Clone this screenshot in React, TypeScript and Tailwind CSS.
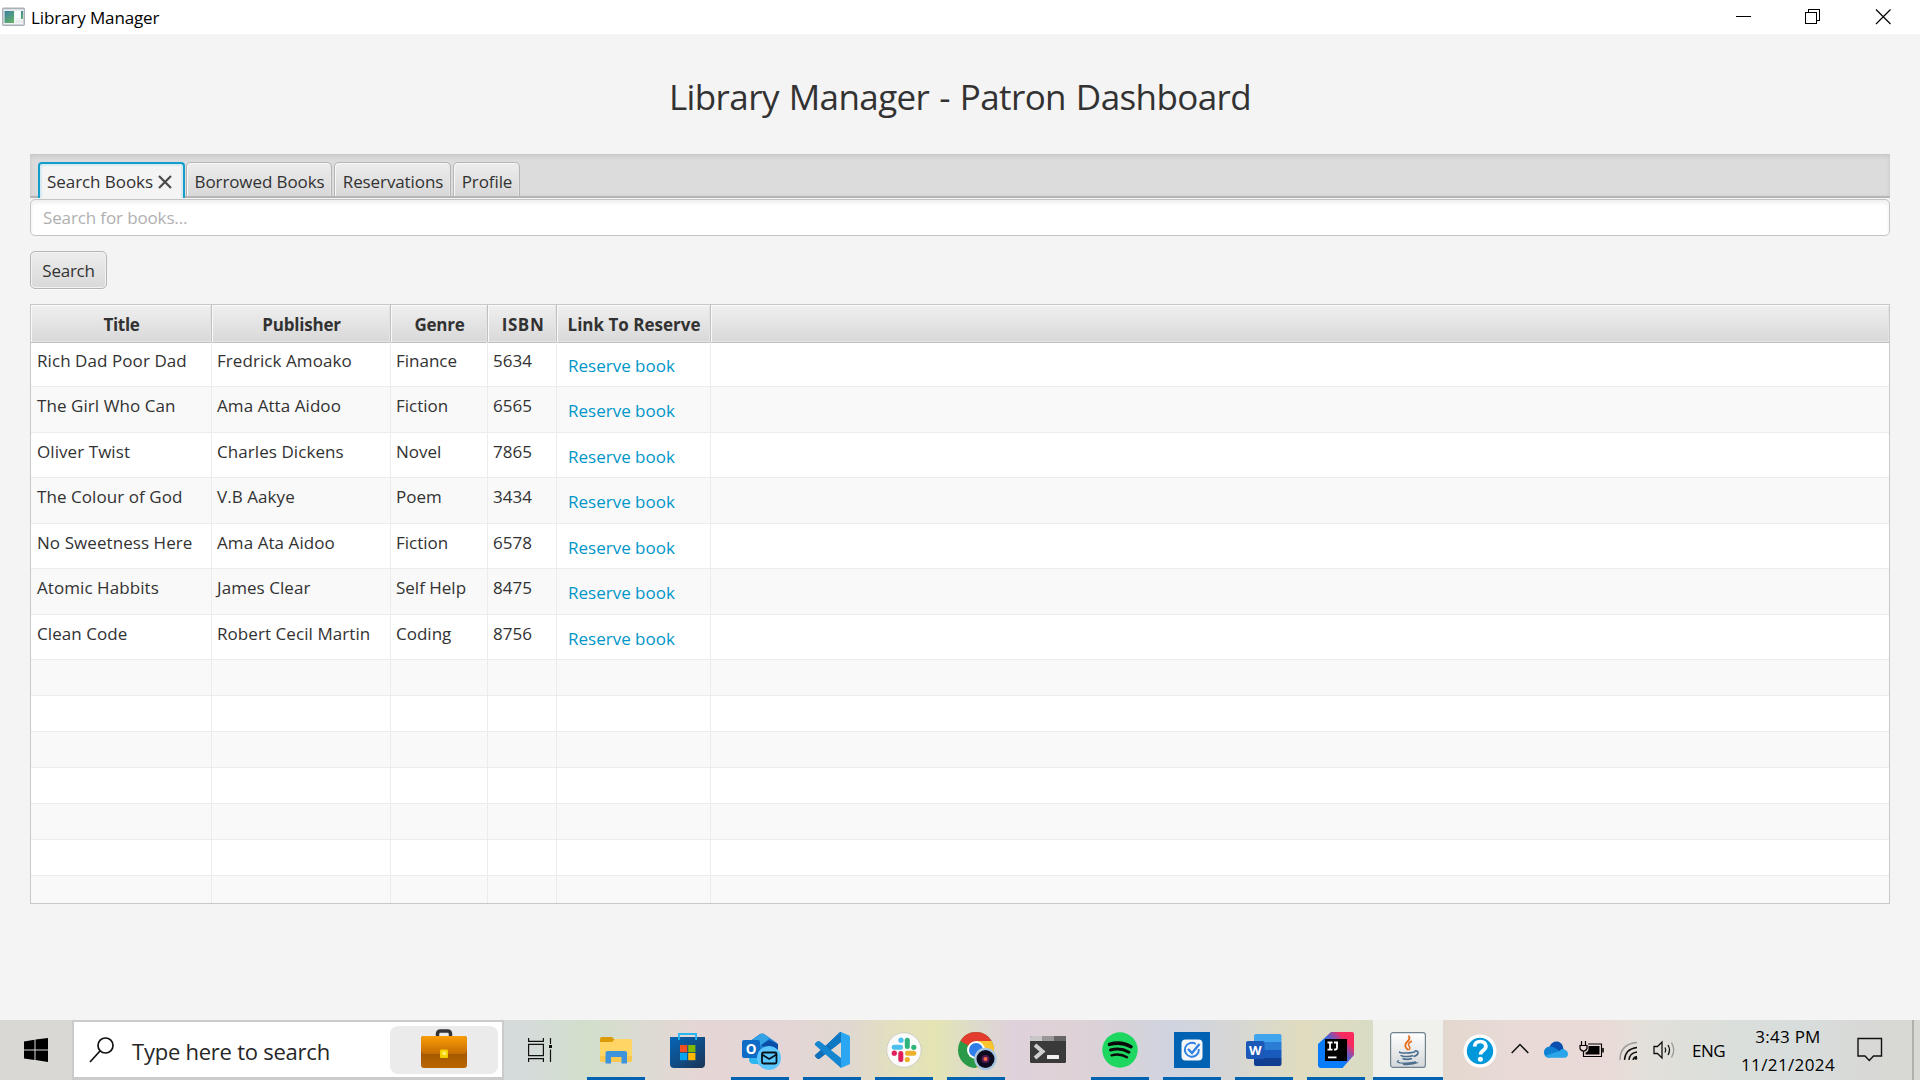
import type { ReactNode } from "react";

type Book = { title: string; publisher: string; genre: string; isbn: string };

const books: Book[] = [
  { title: "Rich Dad Poor Dad", publisher: "Fredrick Amoako", genre: "Finance", isbn: "5634" },
  { title: "The Girl Who Can", publisher: "Ama Atta Aidoo", genre: "Fiction", isbn: "6565" },
  { title: "Oliver Twist", publisher: "Charles Dickens", genre: "Novel", isbn: "7865" },
  { title: "The Colour of God", publisher: "V.B Aakye", genre: "Poem", isbn: "3434" },
  { title: "No Sweetness Here", publisher: "Ama Ata Aidoo", genre: "Fiction", isbn: "6578" },
  { title: "Atomic Habbits", publisher: "James Clear", genre: "Self Help", isbn: "8475" },
  { title: "Clean Code", publisher: "Robert Cecil Martin", genre: "Coding", isbn: "8756" },
];

const columns = "grid grid-cols-[181px_179px_97px_69px_154px_1fr]";

function TitleBar() {
  return (
    <header className="flex h-[34px] items-center bg-white pl-0.5">
      <svg width="24" height="20" viewBox="0 0 24 20">
        <defs>
          <linearGradient id="appPane" x1="0" y1="0" x2="0.6" y2="1">
            <stop offset="0" stopColor="#3d7fa6" />
            <stop offset="1" stopColor="#5fae6c" />
          </linearGradient>
        </defs>
        <rect x="0.75" y="1.25" width="21.5" height="17" rx="1" fill="#f4f5f6" stroke="#a9b0b8" strokeWidth="1.5" />
        <rect x="1.5" y="2" width="20" height="1.5" fill="#dde1e6" />
        <rect x="2.5" y="4" width="9.5" height="12" fill="url(#appPane)" />
        <rect x="13.5" y="4" width="4.5" height="7" fill="#fff" />
        <rect x="19" y="4" width="2" height="8" fill="url(#appPane)" />
        <rect x="13.5" y="13" width="7.5" height="3" fill="#e9ecee" />
      </svg>
      <span className="ml-[5px] pt-[2px] text-[17px] leading-[32px] tracking-[-0.12px] text-black">Library Manager</span>
      <div className="ml-auto flex items-center gap-[54px] pr-7">
        <svg className="-mr-px" width="16" height="16" viewBox="0 0 16 16" fill="none" stroke="#000" shapeRendering="crispEdges">
          <path d="M0 7.5h15" />
        </svg>
        <svg width="16" height="16" viewBox="0 0 16 16" fill="none" stroke="#000" shapeRendering="crispEdges">
          <path d="M.5 3.500h11v11H.5zM3.500 3.500V.5h11v11h-3" />
        </svg>
        <svg width="17" height="16" viewBox="0 0 17 16" fill="none" stroke="#000" strokeWidth="1.200">
          <path d="M1 .5l14.500 14.500M15.500.5L1 15" />
        </svg>
      </div>
    </header>
  );
}

function Tab({ children, width }: { children: ReactNode; width: string }) {
  return (
    <div
      className={`${width} h-[34px] rounded-t-[5px] border border-b-0 border-[#b5b5b5] bg-linear-to-b from-[#ededed] to-[#d8d8d8] pl-px pt-[3px] text-center leading-[32px] tracking-[-0.1px] shadow-[inset_1px_1px_0_#f8f8f8,inset_-1px_0_0_#e6e6e6]`}
    >
      {children}
    </div>
  );
}

function TabBar() {
  return (
    <nav className="flex h-[44px] items-end border-b-2 border-[#b5b5b5] bg-[#dcdcdc] pl-2 shadow-[inset_0_1px_0_#c9c9c9,inset_0_2px_5px_#c6c6c6]">
      <div className="relative -mb-0.5 mr-px flex h-[36px] w-[147px] items-center rounded-t-[4px] border-2 border-b-0 border-[#129dcb] bg-[#f4f4f4] pl-[7px] pt-[2px] tracking-[-0.06px] shadow-[inset_2px_2px_0_#d9ebf2,inset_-2px_0_0_#d9ebf2]">
        Search Books
        <svg className="-mt-px ml-[5px]" width="14" height="14" viewBox="0 0 14 14" stroke="#4a4a4a" strokeWidth="2.200">
          <path d="M1 1l12 12M13 1L1 13" />
        </svg>
      </div>
      <div className="flex gap-[2px]">
        <Tab width="w-[146px]">Borrowed Books</Tab>
        <Tab width="w-[117px]">Reservations</Tab>
        <Tab width="w-[67px]">Profile</Tab>
      </div>
    </nav>
  );
}

function HeaderCell({ children }: { children?: ReactNode }) {
  return (
    <div className="border-b border-r border-[#c0c0c0] bg-linear-to-b from-[#f0f0f0] to-[#d8d8d8] pl-px pt-[3px] text-center font-bold leading-[33.5px] shadow-[inset_1px_1px_0_#fafafa,inset_-1px_-1px_0_#e4e4e4] last:border-r-0">
      {children}
    </div>
  );
}

function BookTable() {
  const cell = "border-r border-[#ececec] pl-[5px] pt-[7px] leading-6";
  return (
    <section className="mt-[15px] h-[600px] overflow-hidden border border-[#c8c8c8] bg-white">
      <div className={`${columns} h-[36.5px]`}>
        <HeaderCell><span className="tracking-[-0.3px]">Title</span></HeaderCell>
        <HeaderCell><span className="tracking-[-0.2px]">Publisher</span></HeaderCell>
        <HeaderCell><span className="tracking-[-0.25px]">Genre</span></HeaderCell>
        <HeaderCell><span className="pl-px tracking-[0.6px]">ISBN</span></HeaderCell>
        <HeaderCell>Link To Reserve</HeaderCell>
        <HeaderCell />
      </div>
      {books.map((book) => (
        <div key={book.isbn} className={`${columns} h-[45.5px] border-b border-[#ececec] odd:bg-[#f9f9f9]`}>
          <div className="border-r border-[#ececec] pl-[6px] pt-[7px] leading-6 tracking-[0.07px]">{book.title}</div>
          <div className={`${cell} tracking-[0.07px]`}>{book.publisher}</div>
          <div className={cell}>{book.genre}</div>
          <div className={cell}>{book.isbn}</div>
          <div className="border-r border-[#ececec] pl-[11px] pt-[12px] leading-6 text-[#0096c9]">Reserve book</div>
        </div>
      ))}
      {[0, 1, 2, 3, 4, 5, 6].map((row) => (
        <div key={row} className={`${columns} h-9 border-b border-[#ececec] odd:bg-[#f9f9f9]`}>
          <div className={cell} />
          <div className={cell} />
          <div className={cell} />
          <div className={cell} />
          <div className={cell} />
        </div>
      ))}
    </section>
  );
}

function Briefcase() {
  return (
    <svg width="46" height="40" viewBox="0 0 46 40">
      <defs>
        <linearGradient id="caseTop" x1="0" y1="0" x2="0" y2="1">
          <stop offset="0" stopColor="#fb9d06" />
          <stop offset="1" stopColor="#c46c02" />
        </linearGradient>
        <linearGradient id="caseLow" x1="0" y1="0" x2="0" y2="1">
          <stop offset="0" stopColor="#8a4700" />
          <stop offset="1" stopColor="#b96700" />
        </linearGradient>
      </defs>
      <path d="M16.500 8V5q0-3 3-3h7q3 0 3 3v3" fill="none" stroke="#33343a" strokeWidth="3.500" />
      <rect y="7" width="46" height="32" rx="3" fill="url(#caseLow)" />
      <path d="M0 10q0-3 3-3h40q3 0 3 3v11q0 4-4 4H4q-4 0-4-4z" fill="url(#caseTop)" />
      <rect x="19" y="20.500" width="8" height="8.500" rx="1" fill="#f5d000" />
      <rect x="21.500" y="22.500" width="3.500" height="3.500" fill="#fff06a" />
    </svg>
  );
}

function FolderIcon() {
  return (
    <svg width="36" height="36" viewBox="0 0 36 36">
      <path d="M2 7q0-2 2-2h10l3 3-3 4H2z" fill="#dc9b08" />
      <path d="M2 10h12l3-3h15q2 0 2 2v19q0 2-2 2H4q-2 0-2-2z" fill="#ffd566" />
      <path d="M2 24h32v4q0 2-2 2H4q-2 0-2-2z" fill="#f8c850" />
      <path d="M7.500 31.500V21q0-2 2-2H27q2 0 2 2v10.500h-5.500V25H13v6.500z" fill="#3d94dc" />
    </svg>
  );
}

function StoreIcon() {
  return (
    <svg width="36" height="36" viewBox="0 0 36 36">
      <defs>
        <linearGradient id="store" x1="0" y1="0" x2="1" y2="1">
          <stop offset="0" stopColor="#0466b8" />
          <stop offset="1" stopColor="#1d3455" />
        </linearGradient>
      </defs>
      <path d="M0 5h35v27q0 4-4 4H4q-4 0-4-4z" fill="url(#store)" />
      <path d="M8.900 8V2h17.200v6" fill="none" stroke="#25b7f3" strokeWidth="1.800" />
      <rect x="10" y="13" width="7.200" height="7.200" fill="#f25022" />
      <rect x="18.200" y="13" width="7.200" height="7.200" fill="#7fba00" />
      <rect x="10" y="21" width="7.200" height="7.200" fill="#00a4ef" />
      <rect x="18.200" y="21" width="7.200" height="7.200" fill="#ffb900" />
    </svg>
  );
}

function OutlookIcon() {
  return (
    <svg className="relative left-[1px] top-[1px]" width="40" height="38" viewBox="0 0 40 38">
      <path d="M9 9L19 2q2-1.200 4 0l13 9v15L22 34 9 29z" fill="#1a7fd4" />
      <path d="M10 9l10-7q1.500-.8 3 0l6 4-14 11z" fill="#33a3e6" />
      <path d="M28 8l9 4v11L20 13z" fill="#0b4ea8" />
      <path d="M8 24h18v8H13q-5 0-5-5z" fill="#2cb6f0" />
      <rect x="1" y="8" width="18" height="18" rx="2" fill="#0f6cc6" />
      <text x="10" y="22" textAnchor="middle" fontSize="13.500" fontWeight="700" fill="#fff" fontFamily="Open Sans">O</text>
      <circle cx="28" cy="26" r="12" fill="#5cc6ff" />
      <rect x="21" y="20.500" width="14.500" height="11" rx="1.500" fill="none" stroke="#06121c" strokeWidth="1.800" />
      <path d="M21 22.500l7.200 4.500 7.300-4.500" fill="none" stroke="#06121c" strokeWidth="1.600" />
    </svg>
  );
}

function VsCodeIcon() {
  return (
    <svg width="36" height="36" viewBox="0 0 36 36">
      <path d="M1 24.500l2 2q1.500 1 3 0L27 10V0L1.500 22.500q-1.500 1-.5 2z" fill="#0f6fb8" />
      <path d="M1 11.500l2-2q1.500-1 3 0L27 26v10L1.500 13.500q-1.500-1-.5-2z" fill="#1485cf" />
      <path d="M27 0l8 3.500q1 .5 1 1.500v26q0 1-1 1.500L27 36z" fill="#2aa6f2" />
      <path d="M27 0v10l-9 7-5-4.500L25 .7q1-.8 2-.7z" fill="#0f78c2" />
    </svg>
  );
}

function SlackIcon() {
  return (
    <svg width="36" height="36" viewBox="0 0 36 36" strokeLinecap="round" strokeWidth="5">
      <circle cx="18" cy="18" r="17.300" fill="#fbfbfb" stroke="#d0cdc0" strokeWidth="1" />
      <path d="M8.200 15.300h6.300" stroke="#4cc0ec" />
      <circle cx="15" cy="8.200" r="2.600" fill="#4cc0ec" />
      <path d="M21.300 8.300v6.200" stroke="#2fb57c" />
      <circle cx="27.800" cy="15.300" r="2.600" fill="#2fb57c" />
      <path d="M21.500 21.200h6.300" stroke="#ecb22e" />
      <circle cx="21.300" cy="27.600" r="2.600" fill="#ecb22e" />
      <path d="M14.800 21.500v6" stroke="#e01e5a" />
      <circle cx="8.300" cy="21.200" r="2.600" fill="#e01e5a" />
    </svg>
  );
}

function ChromeIcon() {
  return (
    <svg className="relative left-[2px] top-[1px]" width="40" height="40" viewBox="0 0 40 40">
      <circle cx="18" cy="19" r="18" fill="#2a9a48" />
      <path d="M18 19L2.400 10A18 18 0 0 1 33.600 10z" fill="#e33b2e" />
      <path d="M18 19V10h15.600A18 18 0 0 1 18 37l7.800-13.500z" fill="#fcc52d" />
      <circle cx="18" cy="19" r="9" fill="#fff" />
      <circle cx="18" cy="19" r="7" fill="#2f7de9" />
      <circle cx="27.500" cy="28" r="11.300" fill="#a9c8e0" />
      <circle cx="27.500" cy="28" r="9" fill="#0d0b22" />
      <circle cx="27.500" cy="28" r="4" fill="#531b50" />
      <circle cx="27.500" cy="28" r="2" fill="#ff6a45" />
    </svg>
  );
}

function TerminalIcon() {
  return (
    <svg width="36" height="36" viewBox="0 0 36 36">
      <rect y="4" width="36" height="27" rx="1.500" fill="#3a3a3a" />
      <path d="M0 9V5.500Q0 4 1.500 4H12v5z" fill="#c8c8c8" />
      <path d="M12 4h12v5H12z" fill="#989898" />
      <path d="M24 4h10.500Q36 4 36 5.500V9H24z" fill="#666" />
      <path d="M5 13l7.500 6.500L5 26" fill="none" stroke="#cfcfcf" strokeWidth="4" />
      <rect x="17" y="23" width="12" height="4" rx="0.500" fill="#f2f2f2" />
    </svg>
  );
}

function SpotifyIcon() {
  return (
    <svg width="36" height="36" viewBox="0 0 36 36" fill="none" stroke="#0a0a0a" strokeLinecap="round">
      <circle cx="18" cy="18" r="17.700" fill="#1ed760" stroke="none" />
      <path d="M7.500 12.400q11.500-3.400 21.500 2.300" strokeWidth="3.500" />
      <path d="M8.500 18q10-2.800 18.500 2.200" strokeWidth="2.900" />
      <path d="M9.500 23.300q8.500-2.300 15.500 1.900" strokeWidth="2.400" />
    </svg>
  );
}

function TodoIcon() {
  return (
    <svg width="36" height="36" viewBox="0 0 36 36">
      <rect width="36" height="36" fill="#0062b2" />
      <rect x="7.500" y="7.500" width="21" height="21" rx="4" fill="#f4f6fa" />
      <path d="M24.800 17a7 7 0 1 1-3-5" fill="none" stroke="#2f80e4" strokeWidth="1.900" />
      <path d="M14 17l4 4 7.500-9" fill="none" stroke="#2f80e4" strokeWidth="2.400" />
    </svg>
  );
}

function WordIcon() {
  return (
    <svg width="36" height="36" viewBox="0 0 36 36">
      <path d="M8 4q0-2 2-2h24q1.500 0 1.500 2v6H8z" fill="#41a5ee" />
      <path d="M8 10h27.500v8H8z" fill="#2b7cd3" />
      <path d="M8 18h27.500v8H8z" fill="#185abd" />
      <path d="M8 26h27.500v6q0 2-2 2H10q-2 0-2-2z" fill="#103f91" />
      <rect y="9" width="18.500" height="18" rx="2" fill="#1b58b8" />
      <text x="9.200" y="22.800" textAnchor="middle" fontSize="13" fontWeight="700" fill="#fff" fontFamily="Open Sans">W</text>
    </svg>
  );
}

function IntelliJIcon() {
  return (
    <svg width="36" height="36" viewBox="0 0 36 36">
      <defs>
        <linearGradient id="idea" x1="0.150" y1="0.800" x2="0.900" y2="0.100">
          <stop offset="0.350" stopColor="#087cfa" />
          <stop offset="0.600" stopColor="#6f58bd" />
          <stop offset="0.850" stopColor="#fb2a5c" />
        </linearGradient>
      </defs>
      <path d="M13 0h21q2 0 2 2v21L24.500 36H3q-3 0-3-3V12z" fill="url(#idea)" />
      <rect x="7" y="7" width="22" height="22" fill="#000" />
      <path d="M9.500 10.500h5M12 10.500v7M9.500 17.700h5M16 10.500h4M19 10.500v5.200q0 2-3 2" fill="none" stroke="#fff" strokeWidth="1.800" />
      <rect x="10" y="24.500" width="8.500" height="1.800" fill="#fff" />
    </svg>
  );
}

function JavaIcon() {
  return (
    <svg width="36" height="36" viewBox="0 0 36 36" fill="none">
      <defs>
        <linearGradient id="javaTile" x1="0" y1="0" x2="0" y2="1">
          <stop offset="0" stopColor="#fff" />
          <stop offset="1" stopColor="#d4d7da" />
        </linearGradient>
      </defs>
      <rect x="0.600" y="0.600" width="34.800" height="34.800" rx="2.500" fill="url(#javaTile)" stroke="#71828f" strokeWidth="1.200" />
      <path d="M18.500 3.500q2.500 3-1.500 6.500t1 8" stroke="#e76f1c" strokeWidth="1.900" />
      <path d="M22 9q-5 2.500-3 5t-.5 4" stroke="#e76f1c" strokeWidth="1.500" />
      <path d="M10 19.500q-2 1.800 7 1.500 6-.2 8-1.200M11 23q0 1.500 6 1.500 4 0 6-1M12.500 26.500q4 1.700 9.500 0M24.500 19q4-.5 3.500 2t-4.500 3.500" stroke="#4b6f8d" strokeWidth="1.600" />
      <path d="M9 28.500q-4 1.500 1 2.300 9 1 16-.8M13 32.300q9 .8 15-1.800" stroke="#4b6f8d" strokeWidth="1.300" />
    </svg>
  );
}

function TaskButton({ open, active, children }: { open?: boolean; active?: boolean; children: ReactNode }) {
  return (
    <div className={`flex h-[60px] flex-col items-center ${active ? "mx-px w-[70px] bg-[#f0f0ec]" : "w-[72px]"}`}>
      <div className="flex h-[57px] items-center pt-[3px]">{children}</div>
      {open && <div className={`h-[3px] bg-[#0063b1] ${active ? "w-[70px]" : "w-[58px]"}`} />}
    </div>
  );
}

function SearchBox() {
  return (
    <div className="flex h-[60px] w-[432px] items-center border-2 border-b-[3px] border-[#cbcbcb] bg-white">
      <svg className="ml-[15px]" width="26" height="26" viewBox="0 0 26 26" fill="none" stroke="#111" strokeWidth="1.700">
        <circle cx="16.500" cy="8.500" r="7.500" />
        <path d="M11 14L1 25" />
      </svg>
      <span className="ml-[17px] whitespace-nowrap pt-[2px] text-[22px] leading-8 tracking-[-0.24px] text-[#262626]">Type here to search</span>
      <div className="ml-auto mr-1 flex h-12 w-[108px] items-center justify-center rounded-lg bg-[#ebebeb] pb-[2px]">
        <Briefcase />
      </div>
    </div>
  );
}

function Tray() {
  return (
    <div className="flex h-[60px] flex-1 items-center pl-[19px]">
      <svg className="mt-[2px]" width="34" height="34" viewBox="0 0 34 34">
        <circle cx="17" cy="17" r="16.500" fill="#fff" />
        <circle cx="17" cy="17" r="13.200" fill="#0098da" />
        <path d="M11.500 12.500q.5-5 5.700-5t5.700 4.600q0 2.500-2.700 4.400t-2.600 4" fill="none" stroke="#fff" strokeWidth="3.700" />
        <circle cx="17.400" cy="25.300" r="2.500" fill="#fff" />
      </svg>
      <svg className="ml-[14px] -mt-[3px]" width="18" height="11" viewBox="0 0 18 11" fill="none" stroke="#111" strokeWidth="1.500">
        <path d="M.7 10L9 1.500l8.300 8.500" />
      </svg>
      <svg className="ml-[14px]" width="26" height="18" viewBox="0 0 26 18">
        <path d="M6.500 6q2-5.500 7-5.500T20 6l1 5-13 2z" fill="#0a4fae" />
        <path d="M1 12q-.5-5.500 5.500-6.500 3.500-.3 6 1.800l4 2.700-9 6.500H5q-3.500-.5-4-4.500z" fill="#1080d2" />
        <path d="M16.500 10q2.500-3.500 6-1 2.500 1 2.500 4t-3 3.800H5q-2-.3-3-2z" fill="#2ba6ea" />
      </svg>
      <svg className="-mt-[2px] ml-[9px]" width="26" height="19" viewBox="0 0 26 19" fill="none" stroke="#000">
        <path d="M3.500 1v4M7.500 1v4M2 5.500h7v3q-1 2.500-3.500 2.500T2 8.500zM5.500 11v5.500H9" strokeWidth="1.200" />
        <path d="M10 4h13.500v12.500H9" strokeWidth="1.100" />
        <path d="M10.500 6h11v8.500h-14v-2q3-1 3-4z" fill="#000" stroke="none" />
        <path d="M25 8v4.500" strokeWidth="1.600" />
      </svg>
      <svg className="ml-[15px] mt-[2px]" width="20" height="20" viewBox="0 0 20 20" fill="none" stroke="#111" strokeWidth="1.400">
        <path d="M1 19Q1 3 18 1.500" stroke="#9a9a98" />
        <path d="M5.500 19Q6 8 18 6.500M10 19q.5-7 8-8M14 19q.5-3 4-3.500" />
        <circle cx="16.800" cy="17.300" r="1.500" fill="#111" stroke="none" />
      </svg>
      <svg className="ml-[14px]" width="24" height="20" viewBox="0 0 24 20" fill="none" stroke="#111" strokeWidth="1.300">
        <path d="M1 6.500h3.500L9 2v16l-4.500-4.500H1z" />
        <path d="M12 7.500q1.500 2.500 0 5M15 5q3 5 0 10" />
        <path d="M18.500 2.500q4.500 7.500 0 15" stroke="#9a9a98" />
      </svg>
      <span className="ml-[15px] w-[34px] pt-[2px] text-[17px] leading-6 tracking-[-0.5px]">ENG</span>
      <div className="ml-[13px] w-[98px] pt-[1px] text-center text-[17px] leading-[28px]">
        <div className="tracking-[0.25px]">3:43 PM</div>
        <div className="tracking-[0.39px]">11/21/2024</div>
      </div>
      <svg className="ml-[20px]" width="26" height="26" viewBox="0 0 26 26" fill="none" stroke="#111" strokeWidth="1.400">
        <path d="M1 1.500h23.500V19H16.500L12.300 23.500 8 19H1z" />
      </svg>
      <div className="ml-auto mr-[6px] h-full w-[2px] bg-[#b0b0ae]" />
    </div>
  );
}

function Taskbar() {
  return (
    <footer className="flex h-[60px] bg-[linear-gradient(90deg,#d9d8d4_0px,#d8d8d4_400px,#d5dbdb_520px,#d2dfcb_590px,#dcdbd2_640px,#e5d6d5_700px,#e4d6d6_780px,#dfd8d0_850px,#e3e1bd_900px,#e4e4b4_935px,#dddacd_980px,#dfd1db_1015px,#dfd2d7_1060px,#d8d2d8_1120px,#cfd4e0_1175px,#d6d7d4_1235px,#e0dcc0_1300px,#d9dcc4_1370px,#e3d8cf_1445px,#e9dad7_1520px,#eadad7_1600px,#e3e0da_1645px,#dcdfda_1710px,#d8dedd_1790px,#d8d8d5_1880px)] text-black">
      <div className="flex w-[72px] items-center justify-center">
        <svg width="24" height="24" viewBox="0 0 24 24" fill="#000">
          <path d="M0 3.500l10.500-1.700v9.700H0zM11.500 1.600L24 0v11.500H11.500zM0 12.500h10.500v9.400L0 20.400zM11.500 12.500H24V24l-12.500-1.900z" />
        </svg>
      </div>
      <SearchBox />
      <div className="flex w-[76px] items-center pl-6">
        <svg width="24" height="24" viewBox="0 0 24 24" fill="none" stroke="#111" strokeWidth="1.200">
          <path d="M.6 0v3.400h14.800V0M.6 6.400h14.800v11.200H.6zM.6 24v-3.400h14.800V24M22.500 0v6M22.500 11.500V24" />
          <path d="M21 7h3v3h-3z" fill="#111" stroke="none" />
        </svg>
      </div>
      <TaskButton open><FolderIcon /></TaskButton>
      <TaskButton><StoreIcon /></TaskButton>
      <TaskButton open><OutlookIcon /></TaskButton>
      <TaskButton open><VsCodeIcon /></TaskButton>
      <TaskButton open><SlackIcon /></TaskButton>
      <TaskButton open><ChromeIcon /></TaskButton>
      <TaskButton><TerminalIcon /></TaskButton>
      <TaskButton open><SpotifyIcon /></TaskButton>
      <TaskButton open><TodoIcon /></TaskButton>
      <TaskButton open><WordIcon /></TaskButton>
      <TaskButton open><IntelliJIcon /></TaskButton>
      <TaskButton open active><JavaIcon /></TaskButton>
      <Tray />
    </footer>
  );
}

export default function App() {
  return (
    <div className="flex h-[1080px] w-[1920px] flex-col overflow-hidden bg-[#f4f4f4] font-['Open_Sans',sans-serif] text-[17px] text-[#323232]">
      <TitleBar />
      <main className="flex-1 px-[30px]">
        <h1 className="h-[120px] pt-[5px] text-center text-[35px] leading-[115px] tracking-[-0.6px] [word-spacing:1.4px]">Library Manager - Patron Dashboard</h1>
        <TabBar />
        <div className="mt-px h-[37px] rounded-[5px] border border-[#c4c4c4] bg-white pl-[12px] leading-[35px] tracking-[-0.13px] text-[#b0b0b0] shadow-[inset_0_3px_4px_#eeeeee]">
          Search for books...
        </div>
        <button className="mt-[15px] block h-[38px] w-[77px] rounded-[5px] border border-[#b5b5b5] bg-linear-to-b from-[#ededed] to-[#d9d9d9] pt-[2px] leading-[34px] tracking-[-0.25px] shadow-[inset_0_0_0_1px_#f2f2f2,0_1px_0_#fafafa]">
          Search
        </button>
        <BookTable />
      </main>
      <Taskbar />
    </div>
  );
}
